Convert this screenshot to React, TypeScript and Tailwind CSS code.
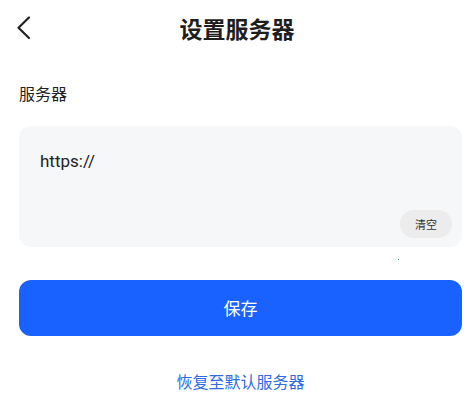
import React from "react";

export default function App() {
  const font = { fontFamily: '"Noto Sans CJK SC", "Noto Sans", Roboto, sans-serif' };
  return (
    <div className="w-[474px] h-[405px] bg-white relative overflow-hidden" style={font}>
      <div className="h-[56px] flex items-center relative">
        <svg className="absolute left-[14px] top-[14px]" width="20" height="28" viewBox="0 0 20 28" fill="none">
          <polyline points="15,3.5 4.5,13.8 15,24" stroke="#222" strokeWidth="2.2" strokeLinecap="round" strokeLinejoin="round" />
        </svg>
        <div className="w-full text-center text-[23px] font-bold text-[#1e1e1e] leading-none">设置服务器</div>
      </div>
      <div className="pl-[19px] pr-[12px] pt-[27px] flex flex-col">
        <div className="text-[16px] leading-[20px] text-[#222]">服务器</div>
        <div className="mt-[23px] h-[121px] rounded-[12px] bg-[#f6f7f9] flex flex-col pl-[21px] pr-[10px] pt-[23px] pb-[9px]">
          <div className="text-[17px] leading-[24px] text-[#222]" style={{ fontFamily: 'Roboto, "Noto Sans CJK SC", sans-serif' }}>https://</div>
          <div className="mt-auto self-end w-[52px] h-[28px] rounded-full bg-[#ececec] flex items-center justify-center text-[11px] text-[#333]">清空</div>
        </div>
        <div className="mt-[33px] h-[56px] rounded-[12px] bg-[#1a62ff] flex items-center justify-center text-[17px] text-white">保存</div>
        <div className="mt-[33px] text-center text-[16px] text-[#2d6ae3] leading-[24px]">恢复至默认服务器</div>
      </div>
      <div className="absolute left-[398px] top-[259px] w-[1px] h-[1px] bg-[#4a8a9a]" />
    </div>
  );
}
